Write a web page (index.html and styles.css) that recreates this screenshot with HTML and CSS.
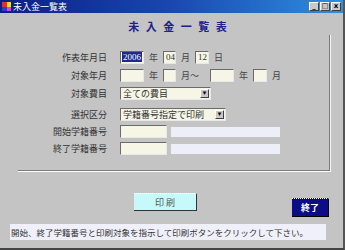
FILE: index.html
```html
<!DOCTYPE html>
<html lang="ja">
<head>
  <meta charset="UTF-8" />
  <title>未入金一覧表</title>
  <link rel="stylesheet" href="styles.css">
</head>
<body>

  <div class="window">
    <div class="titlebar">
      <span class="app-icon"><i class="q1"></i><i class="q2"></i><i class="q3"></i><i class="q4"></i></span>
      <span class="title-text">未入金一覧表</span>
      <div class="win-btns">
        <span class="wbtn">_</span>
        <span class="wbtn">□</span>
        <span class="wbtn">x</span>
      </div>
    </div>

    <h1 class="heading">未 入 金 一 覧 表</h1>

    <div class="panel">
      <div class="row">
        <div class="label">作表年月日</div>
        <div class="field">
          <span class="box w24 sel"><span class="hl">2006</span></span><span class="unit">年</span>
          <span class="box w13">04</span><span class="unit">月</span>
          <span class="box w14">12</span><span class="unit">日</span>
        </div>
      </div>
      <div class="row">
        <div class="label">対象年月</div>
        <div class="field">
          <span class="box w24"></span><span class="unit">年</span>
          <span class="box w13"></span><span class="unit">月～</span>
          <span class="box w24 ml6"></span><span class="unit">年</span>
          <span class="box w14"></span><span class="unit ml6">月</span>
        </div>
      </div>
      <div class="row">
        <div class="label">対象費目</div>
        <div class="field">
          <span class="select w91">全ての費目<span class="arrow">▾</span></span>
        </div>
      </div>
      <div class="row gap-top">
        <div class="label">選択区分</div>
        <div class="field">
          <span class="select w106">学籍番号指定で印刷<span class="arrow">▾</span></span>
        </div>
      </div>
      <div class="row short">
        <div class="label">開始学籍番号</div>
        <div class="field">
          <span class="box w47"></span>
          <span class="flat"></span>
        </div>
      </div>
      <div class="row short">
        <div class="label">終了学籍番号</div>
        <div class="field">
          <span class="box w47"></span>
          <span class="flat"></span>
        </div>
      </div>
    </div>

    <div class="actions">
      <button class="btn-print">印 刷</button>
      <button class="btn-exit">終了</button>
    </div>

    <div class="status">開始、終了学籍番号と印刷対象を指示して印刷ボタンをクリックして下さい。</div>
  </div>

</body>
</html>
```

FILE: styles.css
```css
* {
  box-sizing: border-box;
}

body {
  margin: 0;
  font-family: "Noto Sans CJK JP", sans-serif;
  background: #c4c4c4;
}

.window {
  width: 345px;
  height: 250px;
  background: #c4c4c4;
  border-right: 2px solid #555;
  border-bottom: 2px solid #444;
  display: flex;
  flex-direction: column;
}

.titlebar {
  height: 13px;
  background: linear-gradient(to right, #0a1f86, #1a47b0 50%, #2d8fe0);
  display: flex;
  align-items: center;
  padding: 0 2px 0 2px;
}

.app-icon {
  width: 9px;
  height: 9px;
  display: grid;
  grid-template-columns: 1fr 1fr;
  margin-right: 2px;
}

.app-icon i { display: block; }
.q1 { background: #e03030; }
.q2 { background: #f0e020; }
.q3 { background: #2040e0; }
.q4 { background: #e040e0; }

.title-text {
  color: #fff;
  font-size: 9px;
  line-height: 1;
}

.win-btns {
  margin-left: auto;
  display: flex;
  gap: 1px;
}

.wbtn {
  width: 10px;
  height: 9px;
  background: #c8c8c8;
  border: 1px solid;
  border-color: #fff #404040 #404040 #fff;
  font-family: "DejaVu Sans", sans-serif;
  font-size: 7px;
  font-weight: bold;
  line-height: 6px;
  text-align: center;
  color: #000;
}

.heading {
  margin: 6px 0 0;
  text-align: center;
  font-size: 11px;
  font-weight: bold;
  color: #20208a;
  letter-spacing: 2px;
  padding-left: 14px;
  line-height: 14px;
}

.panel {
  margin: 2px 0 0 18px;
  width: 313px;
  height: 137px;
  border-right: 1px solid #f4f4f4;
  border-bottom: 1px solid #fff;
  box-shadow: inset -1px -1px 0 #7a7a7a;
  padding-top: 13px;
}

.row {
  display: flex;
  align-items: center;
  height: 18px;
}

.row.gap-top {
  margin-top: 3px;
}

.row.short {
  height: 17px;
}

.label {
  width: 90px;
  text-align: right;
  font-size: 9px;
  color: #333;
  padding-right: 1px;
}

.field {
  margin-left: 12px;
  display: flex;
  align-items: center;
  font-size: 9px;
}

.box {
  height: 13px;
  background: #f6f6e6;
  border: 1px solid;
  border-color: #6a6a6a #e8e8e8 #e8e8e8 #6a6a6a;
  font-family: "Liberation Serif", serif;
  font-size: 9px;
  line-height: 11px;
  padding-left: 2px;
  color: #333;
}

.box.sel {
  background: #fafaf0;
  padding-left: 1px;
}

.hl {
  background: #1c2a8a;
  color: #fff;
  display: inline-block;
  line-height: 10px;
  padding: 0 1px;
}

.w13 { width: 13px; }
.w14 { width: 14px; }
.w24 { width: 24px; }
.w47 { width: 47px; }
.ml6 { margin-left: 6px; }

.unit {
  margin: 0 5px 0 5px;
  color: #444;
}

.select {
  height: 13px;
  background: #f6f6e6;
  border: 1px solid;
  border-color: #6a6a6a #e8e8e8 #e8e8e8 #6a6a6a;
  font-size: 9px;
  line-height: 11px;
  padding-left: 2px;
  color: #333;
  display: flex;
  justify-content: space-between;
  align-items: center;
}

.w91 { width: 91px; }
.w106 { width: 106px; }

.arrow {
  width: 9px;
  height: 9px;
  margin-right: 1px;
  background: #c8c8c8;
  border: 1px solid;
  border-color: #fff #404040 #404040 #fff;
  font-size: 7px;
  line-height: 7px;
  text-align: center;
  color: #000;
  font-family: "DejaVu Sans", sans-serif;
}

.flat {
  width: 109px;
  height: 10px;
  margin-left: 4px;
  background: #eeeef8;
}

.actions {
  position: relative;
  height: 48px;
}

.btn-print {
  position: absolute;
  left: 134px;
  top: 21px;
  width: 63px;
  height: 18px;
  background: #c6fafa;
  border: none;
  border-top: 1px dotted #fff;
  border-right: 1px solid #333;
  border-bottom: 1px solid #333;
  font-family: "Noto Sans CJK JP", sans-serif;
  font-size: 9px;
  color: #555;
  padding: 0;
}

.btn-exit {
  position: absolute;
  left: 292px;
  top: 26px;
  width: 37px;
  height: 19px;
  background: #0c0c88;
  border: none;
  border-top: 1px dotted #fff;
  border-right: 1px solid #000;
  border-bottom: 1px solid #000;
  font-family: "Noto Sans CJK JP", sans-serif;
  font-size: 9px;
  font-weight: bold;
  color: #fff;
  padding: 0;
}

.status {
  margin: 4px 0 0 10px;
  width: 316px;
  height: 16px;
  background: #f0f0fa;
  font-size: 8.5px;
  line-height: 16px;
  color: #333;
  padding-left: 1px;
  white-space: nowrap;
  overflow: hidden;
}
```
